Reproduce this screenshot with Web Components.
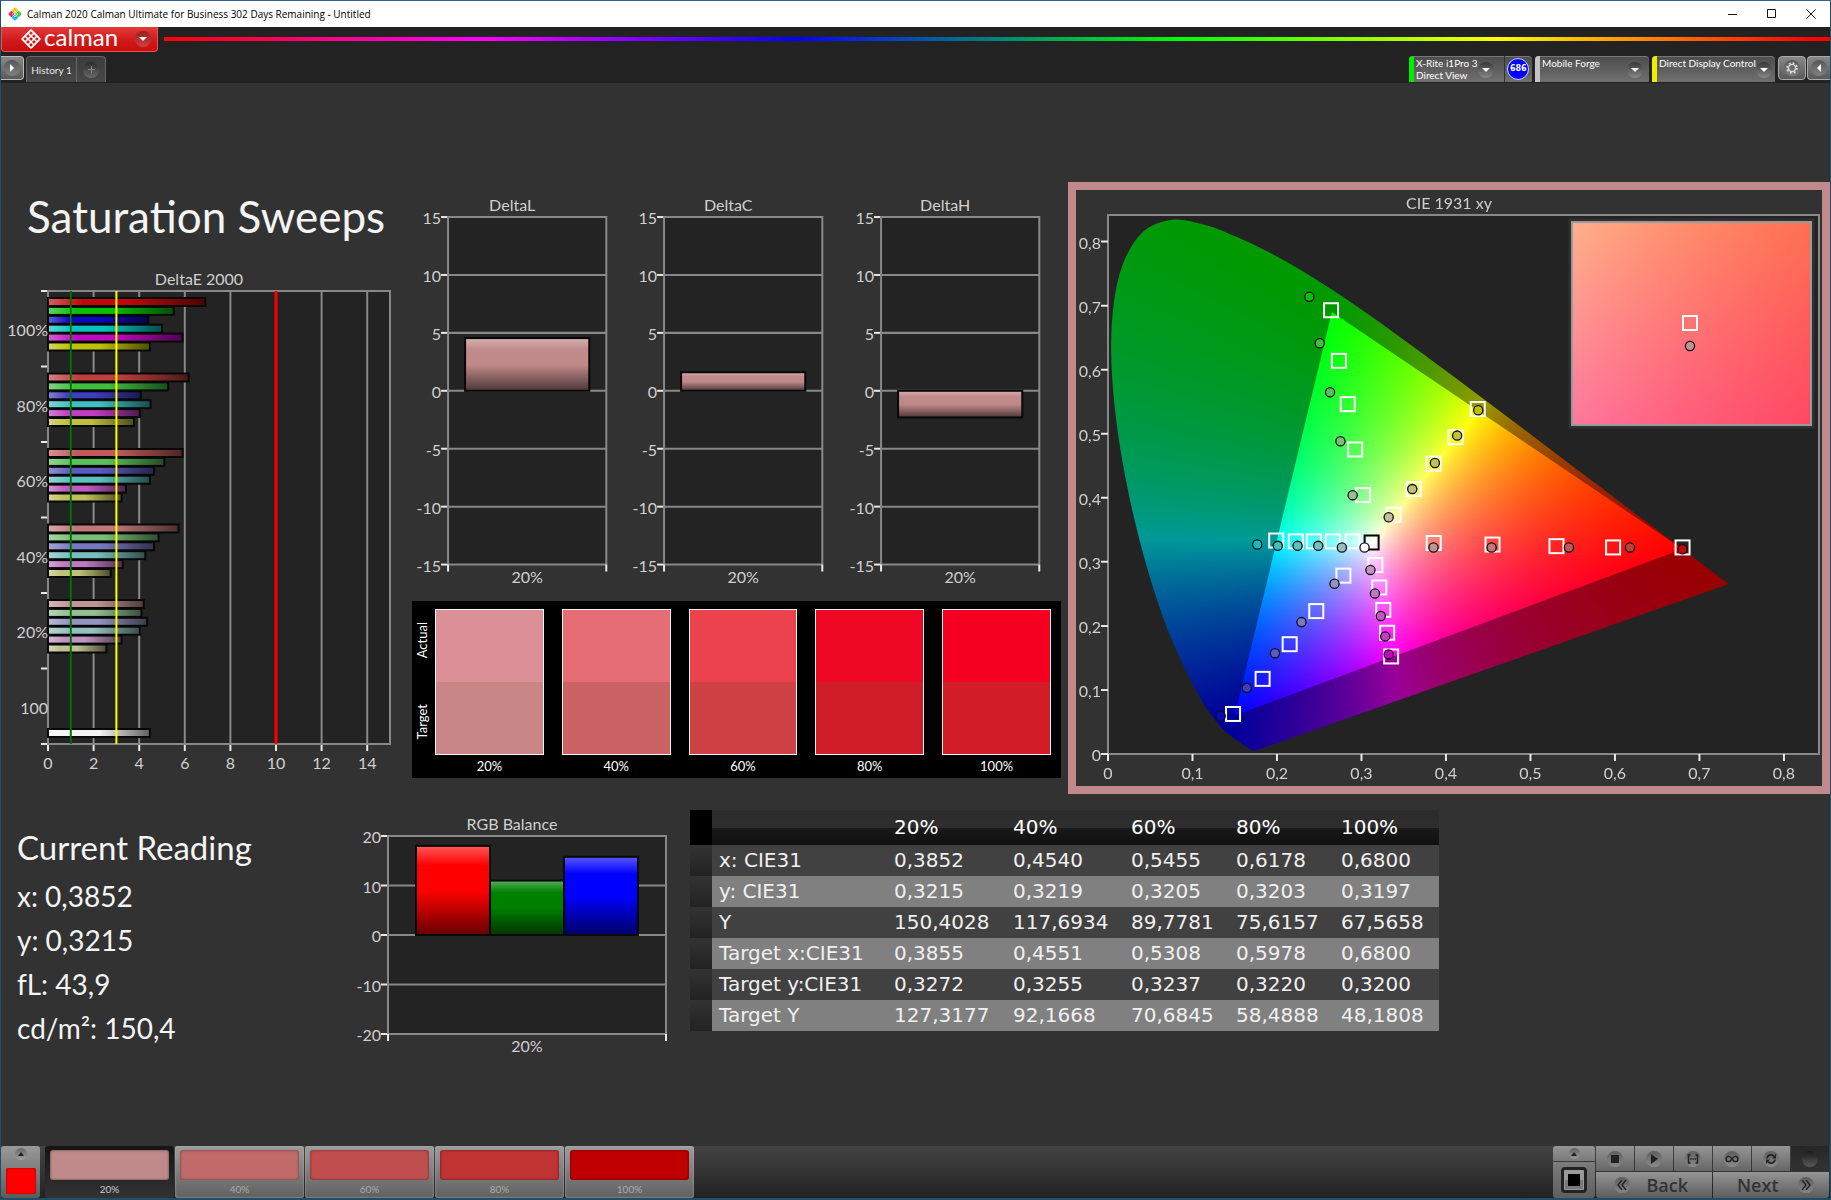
<!DOCTYPE html>
<html lang="en">
<head>
<meta charset="utf-8">
<title>Calman 2020 Calman Ultimate for Business</title>
<style>
html, body { margin: 0; height: 100%; background: #323232; }
body { font-family: Lato, "Open Sans", "Liberation Sans", sans-serif; color: #d0d0d0; }
</style>
</head>
<body>
<calman-app></calman-app>
<script>
const define = (name, css, html, after) => customElements.define(name, class extends HTMLElement {
  constructor() {
    super();
    this.attachShadow({ mode: "open" });
  }
  connectedCallback() {
    const body = typeof html === "function" ? html(this) : html;
    this.shadowRoot.innerHTML = `<style>:host,*{box-sizing:border-box}button{font:inherit;color:inherit;border:0;padding:0;background:none;cursor:pointer}${css}</style>${body}`;
    if (after) after(this, this.shadowRoot);
  }
});

/* Round sunken disc that carries a glyph */
define("glyph-disc", `
  :host { display: inline-grid; place-items: center; flex: none; width: 16px; height: 16px; border-radius: 50%;
    background: linear-gradient(#0005, #fff3); color: #fff; }
  ::slotted(svg) { display: block; }
`, `<slot></slot>`);

const svg = (w, h, inner) => `<svg width="${w}" height="${h}" viewBox="0 0 ${w} ${h}" aria-hidden="true">${inner}</svg>`;
const ARROW_DOWN = svg(10, 6, `<path d="M1 1h8L5 5z" fill="#fff"/>`);
const ARROW_UP = svg(8, 6, `<path d="M1 5h6L4 1z" fill="#222"/>`);

/* Title bar of the window */
define("title-bar", `
  :host { display: flex; align-items: center; height: 26px; background: #fff; color: #000; padding-left: 7px;
    font: 10px/26px "Open Sans", sans-serif; }
  .logo { margin-right: 5px; }
  .title { flex: 1; }
  button { width: 39px; height: 24px; display: grid; place-items: center; }
  .controls { display: flex; }
`, `
  <svg class="logo" width="14" height="14" viewBox="0 0 14 14" aria-hidden="true">
    <rect x="4.6" y="4.6" width="4.8" height="4.8" rx="1" transform="rotate(45 7 7) translate(-2.5 -2.5)" fill="#f8c808"/>
    <rect x="4.6" y="4.6" width="4.8" height="4.8" rx="1" transform="rotate(45 7 7) translate(2.5 -2.5)" fill="#38d048"/>
    <rect x="4.6" y="4.6" width="4.8" height="4.8" rx="1" transform="rotate(45 7 7) translate(-2.5 2.5)" fill="#f02860"/>
    <rect x="4.6" y="4.6" width="4.8" height="4.8" rx="1" transform="rotate(45 7 7) translate(2.5 2.5)" fill="#18b8f0"/>
    <path d="M7 4.200L9.800 7 7 9.800 4.200 7z" fill="none" stroke="#fff" stroke-width=".7"/>
  </svg>
  <span class="title">Calman 2020 Calman Ultimate for Business 302 Days Remaining - Untitled</span>
  <div class="controls">
    <button aria-label="Minimize">${svg(10, 10, `<path d="M0 5.500h9" stroke="#111"/>`)}</button>
    <button aria-label="Maximize">${svg(10, 10, `<path d="M.5.5h8v8h-8z" fill="none" stroke="#111"/>`)}</button>
    <button aria-label="Close">${svg(10, 10, `<path d="M.5.5l9 9m0-9l-9 9" stroke="#111" fill="none"/>`)}</button>
  </div>
`);

/* Red product menu with the spectrum line */
define("brand-bar", `
  :host { display: flex; align-items: flex-start; gap: 6px; height: 29px; background: #222; }
  button { display: flex; align-items: center; width: 157px; height: 25px; padding: 0 6px 0 19px; border-radius: 0 0 4px 4px;
    background: linear-gradient(#e23a3a, #d01818 60%, #c80e0e); border: 1px solid #f05050; border-top: 0; color: #fff; }
  .name { font-size: 24px; line-height: 20px; height: 25px; flex: 1; text-align: left; padding-left: 3px; }
  .line { flex: 1; height: 4px; margin-top: 10px;
    background: linear-gradient(90deg, #f00, #f0f 19%, #00f 38%, #0f0 61%, #ff0 80%, #f00 99%); }
`, `
  <button aria-label="calman menu">
    <svg width="20" height="20" viewBox="0 0 20 20" aria-hidden="true">
      <g transform="rotate(45 10 10)" fill="none" stroke="#fff" stroke-width="1.8">
        <rect x="3.600" y="3.600" width="12.800" height="12.800" rx="1"/>
        <path d="M7.900 3.600v12.800M12.100 3.600v12.800M3.600 7.900h12.800M3.600 12.100h12.800" stroke-width="1.500"/>
      </g>
    </svg>
    <span class="name">calman</span>
    <glyph-disc>${ARROW_DOWN}</glyph-disc>
  </button>
  <div class="line"></div>
`);

/* Source, meter or display selector */
define("device-button", `
  :host { display: flex; height: 26px; width: var(--w, 120px); border-radius: 4px 4px 0 0; overflow: hidden;
    background: linear-gradient(#4c4c4c, #707070); box-shadow: inset 0 1px #777; }
  button { display: flex; flex: 1; text-align: left; }
  .strip { width: 5px; height: 26px; background: var(--strip); }
  .text { flex: 1; padding: 1px 0 0 2px; font-size: 10px; line-height: 12px; color: #fff; white-space: pre; }
  glyph-disc { margin: 6px var(--end, 6px) 0 0; }
`, host => `<button><span class="strip"></span><span class="text">${host.getAttribute("label").replace("|", "\n")}</span><glyph-disc>${ARROW_DOWN}</glyph-disc></button><slot></slot>`);

define("tab-row", `
  :host { display: flex; align-items: flex-end; justify-content: space-between; height: 27px; background: #222; padding-bottom: 1px; }
  div { display: flex; align-items: flex-end; }
  .side { width: 23px; height: 24px; margin-bottom: 2px; border: 1px solid #bbb; border-left: 0; border-radius: 0 4px 4px 0;
    background: linear-gradient(#888, #5a5a5a); display: grid; place-items: center; }
  .side.r { border: 1px solid #aaa; border-right: 0; border-radius: 4px 0 0 4px; }
  .side.gear { width: 28px; border: 1px solid #aaa; border-radius: 4px; }
  .tabs { margin-left: 2px; border-radius: 4px 4px 0 0; border: 1px solid #666; border-bottom: 0; background: linear-gradient(#3c3c3c, #484848); }
  .tabs button { height: 25px; font-size: 10px; color: #e8e8e8; white-space: nowrap; }
  .tabs .hist { width: 50px; border-right: 1px solid #666; }
  .tabs .add { width: 28px; display: grid; place-items: center; }
  .devices { gap: 3px; }
  .devices .end { gap: 1px; }
  .devices .count { display: grid; place-items: center; width: 29px; height: 26px; border-left: 1px solid #333; }
  .count b { width: 22px; height: 22px; border-radius: 50%; background: #00f; border: 1px solid #ccf; color: #fff;
    font: bold 8px/20px "DejaVu Sans", sans-serif; text-align: center; }
`, `
  <div>
    <button class="side" aria-label="Show panel"><glyph-disc>${svg(6, 10, `<path d="M1 1v8l4-4z" fill="#fff"/>`)}</glyph-disc></button>
    <div class="tabs">
      <button class="hist">History 1</button>
      <button class="add" aria-label="Add tab"><glyph-disc>${svg(7, 7, `<path d="M0 3.500h7M3.500 0v7" stroke="#888"/>`)}</glyph-disc></button>
    </div>
  </div>
  <div class="devices">
    <device-button label="X-Rite i1Pro 3|Direct View" style="--strip:#0e0;--w:123px;--end:10px"><div class="count"><b>686</b></div></device-button>
    <device-button label="Mobile Forge" style="--strip:#c4c4c4;--w:114px"></device-button>
    <device-button label="Direct Display Control" style="--strip:#ee0;--w:123px"></device-button>
    <div class="end">
      <button class="side gear" aria-label="Settings"><glyph-disc>${svg(12, 12, `<circle cx="6" cy="6" r="3.600" fill="none" stroke="#ddd" stroke-width="1.300"/><circle cx="6" cy="6" r="5" fill="none" stroke="#ddd" stroke-width="1.600" stroke-dasharray="1.900 2.030"/>`)}</glyph-disc></button>
      <button class="side r" aria-label="Hide panel"><glyph-disc>${svg(6, 10, `<path d="M5 1v8L1 5z" fill="#fff"/>`)}</glyph-disc></button>
    </div>
  </div>
`);

/* ---- charts ---- */
const CHART_CSS = `
  :host { display: block; }
  svg { display: block; width: 100%; height: auto; }
  text { fill: #d0d0d0; font-size: 16px; }
`;
const SHINE = (id, dir) => `<linearGradient id="${id}" x1="0" y1="0" ${dir === "h" ? 'x2="1" y2="0"' : 'x2="0" y2="1"'}>
  <stop offset="0" stop-color="#fff" stop-opacity=".35"/><stop offset=".22" stop-color="#fff" stop-opacity="0"/>
  <stop offset=".5" stop-color="#000" stop-opacity="0"/><stop offset="1" stop-color="#000" stop-opacity=".6"/></linearGradient>`;
const bar = (x, y, w, h, fill) =>
  `<rect x="${x}" y="${y}" width="${w}" height="${h}" fill="${fill}"/><rect x="${x}" y="${y}" width="${w}" height="${h}" fill="url(#shine)" stroke="#080808" stroke-width="2"/>`;

/* Vertical bars round a zero line */
define("bar-chart", CHART_CSS, host => {
  const a = n => host.getAttribute(n), n = k => Number(a(k));
  const W = n("width"), ph = n("plot-height"), L = 36, T = 23, R = W - n("right"), B = T + ph;
  const max = n("max"), step = n("step"), mid = (L + R) / 2;
  const y = v => T + (max - v) / (2 * max) * ph;
  let s = "";
  for (let v = -max; v <= max; v += step)
    s += `<path d="M${L - 7} ${y(v)}H${L}" stroke="#e8e8e8" stroke-width="2"/><path d="M${L} ${y(v)}H${R}" stroke="#888" stroke-width="2"/>
      <text x="${L - 7}" y="${y(v) + 7}" text-anchor="end">${v}</text>`;
  const vals = a("values").split(",").map(Number), cols = a("colors").split(",");
  const inset = n("inset"), bw = (R - L - 2 * inset) / vals.length;
  const bars = vals.map((v, i) => bar(L + inset + i * bw, Math.min(y(v), y(0)), bw, Math.abs(y(v) - y(0)), cols[i])).join("");
  return `<svg viewBox="0 0 ${W} ${ph + 47}" role="img" aria-label="${a("heading")}"><defs>${SHINE("shine", "v")}</defs>
    <rect x="${L}" y="${T}" width="${R - L}" height="${ph}" fill="#232323"/>${s}
    <path d="M${L} ${B}V${T}H${R}V${B}" fill="none" stroke="#888" stroke-width="2"/>
    <path d="M${L} ${B}v7M${R} ${B}v7" stroke="#e8e8e8" stroke-width="2"/>${bars}
    <text x="${mid - 15}" y="17" text-anchor="middle">${a("heading")}</text>
    <text x="${mid}" y="${B + 18}" text-anchor="middle">20%</text></svg>`;
});

/* Colour of one hue at one saturation step: LOW is the level of the weak channels */
const HUES = ["100", "010", "001", "011", "101", "110"];
const LOW = { 100: 8, 80: 62, 60: 90, 40: 120, 20: 148 };
const tone = (hue, sat) => `rgb(${[...HUES[hue]].map(c => c === "1" ? 192 : LOW[sat]).join()})`;

/* Horizontal DeltaE bars */
define("delta-e-chart", CHART_CSS, () => {
  const L = 47, T = 23, W = 342, H = 453, x = v => L + v * W / 15;
  const rows = [
    [100, [6.9, 5.52, 4.4, 5, 5.9, 4.47]], [80, [6.17, 5.27, 4.07, 4.5, 4.03, 3.77]],
    [60, [5.9, 5.1, 4.65, 4.47, 3.42, 3.23]], [40, [5.72, 4.85, 4.65, 4.27, 3.28, 2.75]],
    [20, [4.2, 4.1, 4.35, 4.03, 3.23, 2.56]]
  ];
  const band = H / 6;
  let grid = "", bars = "", labels = "";
  for (let v = 0; v < 15; v += 2) {
    grid += `<path d="M${x(v)} ${T}V${T + H}" stroke="#888" stroke-width="2"/><path d="M${x(v)} ${T + H}v7" stroke="#e8e8e8" stroke-width="2"/>`;
    labels += `<text x="${x(v)}" y="501" text-anchor="middle">${v}</text>`;
  }
  for (let i = 0; i <= 6; i++) grid += `<path d="M${L - 7} ${T + i * band}h6" stroke="#e8e8e8" stroke-width="2"/>`;
  rows.forEach(([sat, vals], g) => {
    labels += `<text x="${L}" y="${T + g * band + 45}" text-anchor="end">${sat}%</text>`;
    vals.forEach((v, i) => bars += bar(L, T + g * band + 7 + i * 8.9, v * W / 15, 8, tone(i, sat)));
  });
  labels += `<text x="${L}" y="${T + 5 * band + 45}" text-anchor="end">100</text>`;
  bars += bar(L, T + 438, 4.47 * W / 15, 8, "#f4f4f4");
  const ref = (v, c, w) => `<path d="M${x(v)} ${T}V${T + H}" stroke="${c}" stroke-width="${w}"/>`;
  return `<svg viewBox="0 0 411 512" role="img" aria-label="DeltaE 2000"><defs>${SHINE("shine", "h")}</defs>
    <rect x="${L}" y="${T}" width="${W}" height="${H}" fill="#232323"/>${grid}
    <rect x="${L}" y="${T}" width="${W}" height="${H}" fill="none" stroke="#888" stroke-width="2"/>${bars}
    ${ref(1, "#007000", 2)}${ref(3, "#ff0", 2)}${ref(10, "#f00", 3)}
    <text x="198" y="17" text-anchor="middle">DeltaE 2000</text>${labels}</svg>`;
});

/* Actual against target swatches */
define("swatch-compare", `
  :host { display: flex; background: #000; padding: 8px 10px 4px 0; color: #fff; font-size: 13px; line-height: 16px; }
  .side { width: 23px; height: 146px; display: flex; flex-direction: column; justify-content: space-between; align-items: center; padding: 13px 3px 15px 0; }
  .side span { writing-mode: vertical-rl; transform: rotate(180deg); }
  .grid { flex: 1; display: grid; grid-template-columns: repeat(5, minmax(0, 1fr)); column-gap: 18px; row-gap: 3px; }
  .swatch { border: 1px solid #f4f4f4; height: 146px; display: grid; grid-template-rows: 1fr 1fr; }
  .label { text-align: center; }
`, () => {
  const data = [["20%", "#da9096", "#c98686"], ["40%", "#e66d75", "#cb6264"], ["60%", "#ec424e", "#ce4246"], ["80%", "#ef0824", "#d01e28"], ["100%", "#f50020", "#d21c26"]];
  return `<div class="side"><span>Actual</span><span>Target</span></div><div class="grid">`
    + data.map(d => `<div class="swatch"><div style="background:${d[1]}"></div><div style="background:${d[2]}"></div></div>`).join("")
    + data.map(d => `<span class="label">${d[0]}</span>`).join("") + `</div>`;
});

/* ---- chromaticity diagram ---- */
const LOCUS = [[.1741,.005],[.1714,.0051],[.1689,.0069],[.1644,.0109],[.1566,.0177],[.144,.0297],[.1355,.0399],[.1241,.0578],[.1096,.0868],[.0913,.1327],[.0687,.2007],[.0454,.295],[.0235,.4127],[.0082,.5384],[.0039,.6548],[.0139,.7502],[.0389,.812],[.0743,.8338],[.1142,.8262],[.1547,.8059],[.1929,.7816],[.2296,.7543],[.2658,.7243],[.3016,.6923],[.3373,.6589],[.3731,.6245],[.4087,.5896],[.4441,.5547],[.4788,.5202],[.5125,.4866],[.5448,.4544],[.5752,.4242],[.6029,.3965],[.627,.3725],[.6482,.3514],[.6658,.334],[.6915,.3083],[.719,.2809],[.7347,.2653]];
const GAMUT = [[.68, .32], [.265, .69], [.15, .06]];
const TARGETS = [
  [.3855,.3295],[.4551,.327],[.5308,.3245],[.5978,.3225],[.68,.3225],
  [.264,.6928],[.2733,.6138],[.2838,.5462],[.2925,.4755],[.3019,.4041],
  [.4376,.5386],[.4114,.4946],[.3852,.4532],[.3619,.4136],[.338,.3735],
  [.1991,.3333],[.2223,.332],[.2436,.332],[.2662,.332],[.2895,.332],
  [.3164,.2951],[.3211,.26],[.3258,.225],[.3304,.1893],[.3351,.1523],
  [.2786,.2785],[.2465,.2231],[.215,.1714],[.183,.1173],[.148,.0625]];
const READINGS = [
  [.68,.3197,0,100],[.6178,.3225,0,80],[.5455,.3225,0,60],[.454,.3225,0,40],[.3852,.3225,0,20],
  [.2383,.7138,1,100],[.2506,.6412,1,80],[.2628,.5647,1,60],[.2751,.4882,1,40],[.2896,.4041,1,20],
  [.1334,.0593,2,100],[.1643,.1033,2,80],[.1976,.1574,2,60],[.229,.2059,2,40],[.2681,.2658,2,20],
  [.1766,.327,3,100],[.201,.325,3,80],[.2244,.325,3,60],[.2488,.325,3,40],[.2768,.3225,3,20],
  [.3322,.1555,4,100],[.3281,.1836,4,80],[.3228,.2154,4,60],[.3159,.2505,4,40],[.3106,.2874,4,20],
  [.4382,.5366,5,100],[.4132,.4971,5,80],[.3869,.4544,5,60],[.3601,.4136,5,40],[.3322,.3697,5,20]];
const P = { L: 32, T: 25, W: 711, H: 539, S: .8415 };
const PX = x => P.L + x / P.S * P.W, PY = y => P.T + P.H - y / P.S * P.H;

/* Fills a canvas with the brightest linear P3 colour at each xy */
function colourField(w, h, x0, x1, y0, y1, gain) {
  const c = document.createElement("canvas");
  c.width = w; c.height = h;
  const g = c.getContext("2d"), img = g.createImageData(w, h), d = img.data;
  for (let j = 0; j < h; j++) for (let i = 0; i < w; i++) {
    const x = x0 + (x1 - x0) * (i + .5) / w, y = Math.max(y1 - (y1 - y0) * (j + .5) / h, .0005);
    const X = x / y, Z = (1 - x - y) / y;
    const r = Math.max(2.4935 * X - .93138 - .40271 * Z, 0);
    const gr = Math.max(-.82949 * X + 1.76266 + .02362 * Z, 0);
    const b = Math.max(.03585 * X - .07617 + .95688 * Z, 0);
    const k = 255 * gain / Math.max(r, gr, b, 1e-6), o = (j * w + i) * 4;
    d[o] = r * k; d[o + 1] = gr * k; d[o + 2] = b * k; d[o + 3] = 255;
  }
  g.putImageData(img, 0, 0);
  return c;
}

define("cie-chart", `
  :host { display: grid; border: 8px solid #c18a8a; }
  canvas, svg { grid-area: 1 / 1; display: block; width: 100%; height: auto; }
  text { fill: #d0d0d0; font-size: 16px; }
`, () => {
  let axis = "";
  for (let i = 0; i <= 8; i++) {
    const v = i / 10, t = i ? `0,${i}` : "0";
    axis += `<path d="M${PX(v)} ${P.T + P.H}v7M${P.L - 7} ${PY(v)}h7" stroke="#e8e8e8" stroke-width="2"/>
      <text x="${PX(v)}" y="589" text-anchor="middle">${t}</text><text x="${P.L - 7}" y="${PY(v) + 7}" text-anchor="end">${t}</text>`;
  }
  const sq = (x, y, c) => `<rect x="${x - 7}" y="${y - 7}" width="14" height="14" fill="none" stroke="${c}" stroke-width="2"/>`;
  const dot = (x, y, f) => `<circle cx="${x}" cy="${y}" r="4.6" fill="${f}" stroke="#111" stroke-width="1.3"/>`;
  return `<canvas width="746" height="596"></canvas>
  <svg viewBox="0 0 746 596" role="img" aria-label="CIE 1931 xy">
    <rect x="${P.L}" y="${P.T}" width="${P.W}" height="${P.H}" fill="none" stroke="#888" stroke-width="2"/>${axis}
    <text x="373" y="19" text-anchor="middle">CIE 1931 xy</text>
    ${TARGETS.map(p => sq(PX(p[0]), PY(p[1]), "#fff")).join("")}${sq(PX(.312), PY(.3302), "#000")}
    ${READINGS.map(p => dot(PX(p[0]), PY(p[1]), tone(p[2], p[3]))).join("")}${dot(PX(.3036), PY(.3225), "#fff")}
    <rect x="494" y="30" width="243" height="207" fill="none" stroke="#303030" stroke-width="3"/>
    <rect x="496" y="32" width="239" height="203" fill="none" stroke="#999" stroke-width="2"/>
    ${sq(614, 133, "#fff")}${dot(614, 156, tone(0, 20))}
  </svg>`;
}, (host, root) => {
  const g = root.querySelector("canvas").getContext("2d");
  g.fillStyle = "#232323";
  g.fillRect(P.L, P.T, P.W, P.H);
  const pts = LOCUS.map(p => [PX(p[0]), PY(p[1])]);
  const paint = (trace, gain) => {
    g.save(); g.beginPath(); trace(); g.closePath(); g.clip();
    g.drawImage(colourField(P.W, P.H, 0, P.S, 0, P.S, gain), P.L, P.T);
    g.restore();
  };
  paint(() => {
    g.moveTo(...pts[0]);
    for (let i = 0; i < pts.length - 1; i++) {
      const a = pts[Math.max(i - 1, 0)], b = pts[i], c = pts[i + 1], d = pts[Math.min(i + 2, pts.length - 1)];
      g.bezierCurveTo(b[0] + (c[0] - a[0]) / 6, b[1] + (c[1] - a[1]) / 6, c[0] - (d[0] - b[0]) / 6, c[1] - (d[1] - b[1]) / 6, c[0], c[1]);
    }
  }, .6);
  paint(() => GAMUT.forEach((p, i) => g[i ? "lineTo" : "moveTo"](PX(p[0]), PY(p[1]))), 1);
  g.drawImage(colourField(239, 203, .366, .422, .3005, .3535, 1), 496, 32);
});

/* Big readout of the current patch */
define("current-reading", `
  :host { display: block; padding: 30px 0 0 16px; color: #f4f4f4; }
  h2 { margin: 0 0 4px; font-weight: 400; font-size: 33px; line-height: 46px; }
  p { margin: 0; font-size: 28px; line-height: 44px; }
`, `<h2>Current Reading</h2><p>x: 0,3852</p><p>y: 0,3215</p><p>fL: 43,9</p><p>cd/m²: 150,4</p>`);

define("reading-table", `
  :host { display: block; padding-top: 16px; }
  table { width: 100%; border-collapse: collapse; table-layout: fixed; color: #f0f0f0;
    font: 20px/31px "DejaVu Sans", sans-serif; }
  th, td { padding: 0 0 0 7px; height: 31px; text-align: left; font-weight: 400; white-space: nowrap; }
  thead th { height: 35px; color: #fff; background: linear-gradient(#2c2c2c, #2e2e2e 50%, #1a1a1a 50%, #101010); }
  thead td { padding: 0; background: #000; }
  tbody td:first-child { background: linear-gradient(#333, #222); }
  tbody tr { background: #414141; }
  tbody tr:nth-child(even) { background: #808080; }
`, () => {
  const rows = [
    ["x: CIE31", "0,3852", "0,4540", "0,5455", "0,6178", "0,6800"], ["y: CIE31", "0,3215", "0,3219", "0,3205", "0,3203", "0,3197"],
    ["Y", "150,4028", "117,6934", "89,7781", "75,6157", "67,5658"], ["Target x:CIE31", "0,3855", "0,4551", "0,5308", "0,5978", "0,6800"],
    ["Target y:CIE31", "0,3272", "0,3255", "0,3237", "0,3220", "0,3200"], ["Target Y", "127,3177", "92,1668", "70,6845", "58,4888", "48,1808"]];
  const cols = [22, 175, 119, 118, 105, 105, 105];
  return `<table><colgroup>${cols.map(w => `<col style="width:${(w / 7.49).toFixed(2)}%">`).join("")}</colgroup>
    <thead><tr><td></td><th></th>${["20%", "40%", "60%", "80%", "100%"].map(t => `<th scope="col">${t}</th>`).join("")}</tr></thead>
    <tbody>${rows.map(r => `<tr><td></td><th scope="row">${r[0]}</th>${r.slice(1).map(t => `<td>${t}</td>`).join("")}</tr>`).join("")}</tbody></table>`;
});

/* Saturation sweeps page */
define("sweep-page", `
  :host { display: block; flex: 1; padding-top: 99px; background: #323232; }
  .top { display: grid; grid-template-columns: minmax(0, 411fr) minmax(0, 656fr) minmax(0, 762fr); }
  h1 { margin: 0; font-weight: 400; font-size: 44px; line-height: 52px; padding: 8px 0 26px 26px; color: #f4f4f4; white-space: nowrap; }
  .mid { padding-top: 12px; margin-right: 7px; }
  .deltas { display: grid; grid-template-columns: repeat(3, minmax(0, 1fr)); margin-bottom: 12px; }
  .bottom { display: grid; grid-template-columns: minmax(0, 351fr) minmax(0, 338fr) minmax(0, 749fr) minmax(0, 391fr); }
  .bottom > bar-chart { padding-top: 19px; }
`, `
  <section class="top">
    <div><h1>Saturation Sweeps</h1><delta-e-chart></delta-e-chart></div>
    <div class="mid">
      <div class="deltas">
        <bar-chart heading="DeltaL" width="216" right="22" plot-height="347" max="15" step="5" inset="17" values="4.55" colors="#c18a8a"></bar-chart>
        <bar-chart heading="DeltaC" width="216" right="22" plot-height="347" max="15" step="5" inset="17" values="1.6" colors="#c18a8a"></bar-chart>
        <bar-chart heading="DeltaH" width="216" right="22" plot-height="347" max="15" step="5" inset="17" values="-2.3" colors="#c18a8a"></bar-chart>
      </div>
      <swatch-compare></swatch-compare>
    </div>
    <cie-chart></cie-chart>
  </section>
  <section class="bottom">
    <current-reading></current-reading>
    <bar-chart heading="RGB Balance" width="338" right="24" plot-height="198" max="20" step="10" inset="28" values="18,11,15.8" colors="#ff0000,#008000,#0000ff"></bar-chart>
    <reading-table></reading-table>
  </section>
`);

/* Patch strip and transport */
define("patch-tile", `
  :host { display: block; width: 129px; }
  button { display: flex; flex-direction: column; width: 100%; height: 52px; padding: 4px 5px 0; border-radius: 3px;
    background: linear-gradient(#9c9c9c, #606060); box-shadow: inset 0 0 2px #bbb; color: #aaa; font-size: 10px; line-height: 18px; }
  :host([current]) button { background: linear-gradient(#141414, #333); box-shadow: none; color: #ccc; }
  .c { width: 100%; height: 31px; border-radius: 3px; box-shadow: inset 0 0 2px 1px #0004; }
  .t { width: 100%; text-align: center; }
`, h => `<button><span class="c" style="background:${h.getAttribute("color")}"></span><span class="t">${h.getAttribute("label")}</span></button>`);

define("bottom-bar", `
  :host { display: flex; justify-content: space-between; height: 52px; background: linear-gradient(#444, #222); padding-right: 1px; }
  .patches { display: flex; gap: 1px; }
  .cur { width: 39px; height: 52px; margin-right: 4px; display: flex; flex-direction: column; align-items: center; gap: 8px;
    padding-top: 2px; background: linear-gradient(#999, #5c5c5c); border-radius: 3px; }
  .cur i { width: 30px; height: 26px; background: #f00; border-radius: 2px; box-shadow: inset 0 0 2px #0008; }
  .cur glyph-disc { width: 12px; height: 12px; }
  .right { display: flex; gap: 1px; }
  .view { display: flex; flex-direction: column; gap: 1px; width: 42px; }
  .view button { background: linear-gradient(#959595, #7a7a7a); width: 100%; display: grid; place-items: center; height: 15px; border-radius: 3px 3px 0 0; }
  .view button + button { height: 36px; border-radius: 0 0 3px 3px; background: linear-gradient(#7c7c7c, #5e5e5e); }
  .view glyph-disc { width: 11px; height: 11px; }
  .ctl { display: grid; grid-template-columns: repeat(6, 38px); gap: 1px; grid-template-rows: 25px 26px; width: 233px; }
  .ctl button { display: flex; align-items: center; justify-content: center; background: linear-gradient(#959595, #666); }
  .ctl button:disabled { background: linear-gradient(#262626, #333); }
  .ctl .wide { grid-column: span 3; justify-content: space-between; padding: 0 24px 0 18px; border-radius: 0 0 0 3px;
    font: 600 18px/24px "Open Sans", sans-serif; color: #333; background: linear-gradient(#959595, #5c5c5c); }
  .ctl .wide + .wide { padding: 0 15px 0 24px; border-radius: 0 0 3px 0; }
`, `
  <div class="patches">
    <button class="cur" aria-label="Current patch"><glyph-disc>${ARROW_UP}</glyph-disc><i></i></button>
    <patch-tile current label="20%" color="#c18a8a"></patch-tile>
    <patch-tile label="40%" color="#c16a6a"></patch-tile>
    <patch-tile label="60%" color="#c14e4e"></patch-tile>
    <patch-tile label="80%" color="#c03333"></patch-tile>
    <patch-tile label="100%" color="#c00000"></patch-tile>
  </div>
  <div class="right">
    <div class="view">
      <button aria-label="More"><glyph-disc>${ARROW_UP}</glyph-disc></button>
      <button aria-label="Pattern window">${svg(26, 26, `<rect x="1.5" y="1.5" width="23" height="23" rx="2.5" fill="#999" stroke="#222" stroke-width="3"/><path d="M4 13h18v9H4z" fill="#777"/><path d="M7 7h12v12H7z"/>`)}</button>
    </div>
    <div class="ctl">
      <button aria-label="Stop"><glyph-disc>${svg(8, 8, `<path d="M0 0h8v8H0z" fill="#222"/>`)}</glyph-disc></button>
      <button aria-label="Play"><glyph-disc>${svg(8, 10, `<path d="M1 0v10l7-5z" fill="#222"/>`)}</glyph-disc></button>
      <button aria-label="Step"><glyph-disc>${svg(12, 10, `<path d="M3.500 1h-2v8h2M8.500 1h2v8h-2" fill="none" stroke="#222" stroke-width="1.500"/><path d="M3.200 5h6" stroke="#222" stroke-width="1.500" stroke-dasharray="1.400 .8"/>`)}</glyph-disc></button>
      <button aria-label="Loop"><glyph-disc>${svg(14, 8, `<path d="M7 4C5.500 1.800 4.800 1.400 3.700 1.400a2.600 2.600 0 0 0 0 5.200C4.800 6.600 5.500 6.200 7 4s2.200-2.600 3.300-2.600a2.600 2.600 0 0 1 0 5.200C9.200 6.600 8.500 6.200 7 4z" fill="none" stroke="#222" stroke-width="1.400"/>`)}</glyph-disc></button>
      <button aria-label="Refresh"><glyph-disc>${svg(12, 12, `<path d="M2 5.500A4 4 0 0 1 9 3.300M10 6.500A4 4 0 0 1 3 8.700" fill="none" stroke="#222" stroke-width="1.700"/><path d="M11 1v4.500H6.800zM1 11V6.500h4.200z" fill="#222"/>`)}</glyph-disc></button>
      <button disabled aria-label="Record"><glyph-disc></glyph-disc></button>
      <button class="wide"><glyph-disc>${svg(10, 10, `<path d="M5 0L1 5l4 5M9 0L5 5l4 5" fill="none" stroke="#222" stroke-width="1.400"/>`)}</glyph-disc>Back</button>
      <button class="wide">Next<glyph-disc>${svg(10, 10, `<path d="M1 0l4 5-4 5M5 0l4 5-4 5" fill="none" stroke="#222" stroke-width="1.400"/>`)}</glyph-disc></button>
    </div>
  </div>
`);

define("calman-app", `
  :host { display: flex; flex-direction: column; min-height: 100vh; border: 1px solid #1f4e66; border-top-color: #3a6090; border-bottom-width: 2px; }
`, `<title-bar></title-bar><brand-bar></brand-bar><tab-row></tab-row><sweep-page></sweep-page><bottom-bar></bottom-bar>`);
</script>
</body>
</html>
